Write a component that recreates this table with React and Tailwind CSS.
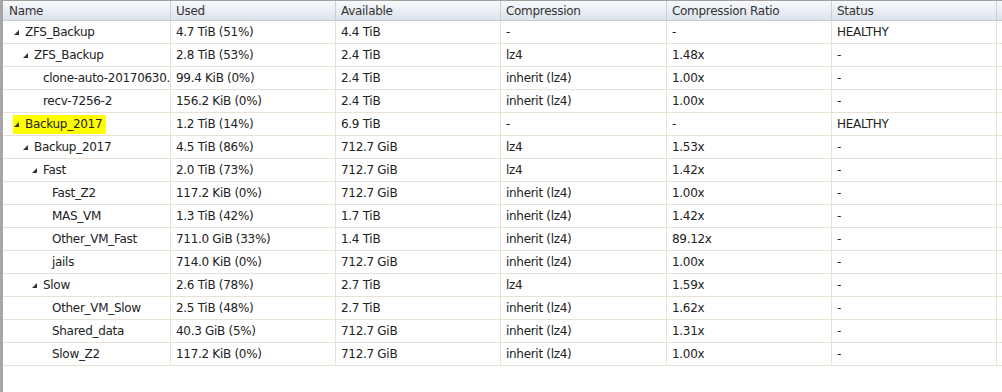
import React from "react";

const rows = [
  { name: "ZFS_Backup", level: 0, tri: true, used: "4.7 TiB (51%)", avail: "4.4 TiB", comp: "-", ratio: "-", status: "HEALTHY" },
  { name: "ZFS_Backup", level: 1, tri: true, used: "2.8 TiB (53%)", avail: "2.4 TiB", comp: "lz4", ratio: "1.48x", status: "-" },
  { name: "clone-auto-20170630.1", level: 2, used: "99.4 KiB (0%)", avail: "2.4 TiB", comp: "inherit (lz4)", ratio: "1.00x", status: "-" },
  { name: "recv-7256-2", level: 2, used: "156.2 KiB (0%)", avail: "2.4 TiB", comp: "inherit (lz4)", ratio: "1.00x", status: "-" },
  { name: "Backup_2017", level: 0, tri: true, hl: true, used: "1.2 TiB (14%)", avail: "6.9 TiB", comp: "-", ratio: "-", status: "HEALTHY" },
  { name: "Backup_2017", level: 1, tri: true, used: "4.5 TiB (86%)", avail: "712.7 GiB", comp: "lz4", ratio: "1.53x", status: "-" },
  { name: "Fast", level: 2, tri: true, used: "2.0 TiB (73%)", avail: "712.7 GiB", comp: "lz4", ratio: "1.42x", status: "-" },
  { name: "Fast_Z2", level: 3, used: "117.2 KiB (0%)", avail: "712.7 GiB", comp: "inherit (lz4)", ratio: "1.00x", status: "-" },
  { name: "MAS_VM", level: 3, used: "1.3 TiB (42%)", avail: "1.7 TiB", comp: "inherit (lz4)", ratio: "1.42x", status: "-" },
  { name: "Other_VM_Fast", level: 3, used: "711.0 GiB (33%)", avail: "1.4 TiB", comp: "inherit (lz4)", ratio: "89.12x", status: "-" },
  { name: "jails", level: 3, used: "714.0 KiB (0%)", avail: "712.7 GiB", comp: "inherit (lz4)", ratio: "1.00x", status: "-" },
  { name: "Slow", level: 2, tri: true, used: "2.6 TiB (78%)", avail: "2.7 TiB", comp: "lz4", ratio: "1.59x", status: "-" },
  { name: "Other_VM_Slow", level: 3, used: "2.5 TiB (48%)", avail: "2.7 TiB", comp: "inherit (lz4)", ratio: "1.62x", status: "-" },
  { name: "Shared_data", level: 3, used: "40.3 GiB (5%)", avail: "712.7 GiB", comp: "inherit (lz4)", ratio: "1.31x", status: "-" },
  { name: "Slow_Z2", level: 3, used: "117.2 KiB (0%)", avail: "712.7 GiB", comp: "inherit (lz4)", ratio: "1.00x", status: "-" },
];

const padByLevel = ["pl-[11px]", "pl-[20px]", "pl-[29px]", "pl-[38px]"];
const leafPad = ["pl-[22px]", "pl-[31px]", "pl-[40px]", "pl-[49px]"];

function Tri() {
  return (
    <svg width="5" height="5" viewBox="0 0 5 5" className="mr-[6px] shrink-0">
      <polygon points="5,0 5,5 0,5" fill="#333" />
    </svg>
  );
}

const cols = "grid grid-cols-[167px_165px_165px_166px_165px_166px]";

export default function App() {
  return (
    <div className="w-[1002px] h-[392px] bg-white flex text-[12px] tracking-[-0.3px] text-[#222] overflow-hidden" style={{ fontFamily: "Tahoma, 'DejaVu Sans', sans-serif" }}>
      <div className="w-[3px] shrink-0 bg-[#a5a5a5]" />
      <div className="flex-1 flex flex-col">
        <div className={`${cols} h-[21px] border-t border-[#a0a0a0] border-b border-b-[#c5ccd6] bg-gradient-to-b from-[#f7f9fb] to-[#dde3ec] text-[#333]`}>
          {["Name", "Used", "Available", "Compression", "Compression Ratio", "Status"].map((h, i) => (
            <div key={i} className={`flex items-center ${i === 0 ? "pl-[6px]" : "pl-[5px] border-l border-[#c9d0da]"} ${i === 5 ? "border-r border-r-[#c9d0da]" : ""}`}>{h}</div>
          ))}
        </div>
        {rows.map((r, i) => (
          <div key={i} className={`${cols} h-[23px] border-b border-[#ebe0d4]`}>
            <div className={`flex items-center whitespace-nowrap overflow-hidden ${r.tri ? padByLevel[r.level] : leafPad[r.level]}`}>
              {r.hl ? (
                <span className="flex items-center bg-[#ffff00] -ml-[1px] pl-[1px] pr-[4px] h-[19px]">
                  <Tri />
                  {r.name}
                </span>
              ) : (
                <>
                  {r.tri && <Tri />}
                  {r.name}
                </>
              )}
            </div>
            <div className="flex items-center pl-[5px] border-l border-[#ebe0d4]">{r.used}</div>
            <div className="flex items-center pl-[5px] border-l border-[#ebe0d4]">{r.avail}</div>
            <div className="flex items-center pl-[5px] border-l border-[#ebe0d4]">{r.comp}</div>
            <div className="flex items-center pl-[5px] border-l border-[#ebe0d4]">{r.ratio}</div>
            <div className="flex items-center pl-[5px] border-l border-r border-[#ebe0d4]">{r.status}</div>
          </div>
        ))}
      </div>
    </div>
  );
}
